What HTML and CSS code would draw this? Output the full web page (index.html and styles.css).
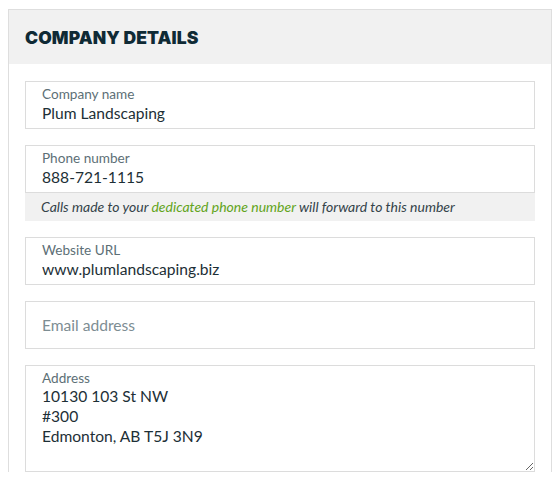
FILE: index.html
```html
<!DOCTYPE html>
<html lang="en">
<head>
    <meta charset="UTF-8">
    <meta name="viewport" content="width=device-width, initial-scale=1.0">
    <title>Company Details</title>
    <link rel="stylesheet" href="styles.css">
</head>
<body>
    <div class="panel">
        <div class="panel-header">
            <h2>Company Details</h2>
        </div>
        <form class="panel-body">
            <div class="field">
                <label class="field-label" for="companyName">Company name</label>
                <input class="field-input" type="text" id="companyName" value="Plum Landscaping">
            </div>
            <div class="field field-with-hint">
                <label class="field-label" for="phone">Phone number</label>
                <input class="field-input" type="text" id="phone" value="888-721-1115">
            </div>
            <p class="hint">Calls made to your <a href="#">dedicated phone number</a> will forward to this number</p>
            <div class="field">
                <label class="field-label" for="website">Website URL</label>
                <input class="field-input" type="text" id="website" value="www.plumlandscaping.biz">
            </div>
            <div class="field">
                <input class="field-input field-empty" type="email" id="email" placeholder="Email address">
            </div>
            <div class="field">
                <label class="field-label" for="address">Address</label>
                <textarea class="field-input field-area" id="address">10130 103 St NW
#300
Edmonton, AB T5J 3N9</textarea>
            </div>
        </form>
    </div>
</body>
</html>
```

FILE: styles.css
```css
body {
    font-family: Lato, "Source Sans Pro", sans-serif;
    margin: 9px 8px 0;
    background-color: #fff;
    color: #1d2f36;
}
.panel {
    border: 1px solid #dedede;
    border-bottom: none;
}
.panel-header {
    background-color: #f1f1f1;
    height: 54px;
    padding: 0 16px;
    display: flex;
    align-items: center;
}
.panel-header h2 {
    margin: 0;
    font-family: Inter, sans-serif;
    font-weight: 900;
    font-size: 17.5px;
    text-transform: uppercase;
    color: #0f2a35;
    letter-spacing: 0.1px;
}
.panel-body {
    padding: 17px 16px 0;
}
.field {
    position: relative;
    margin-bottom: 16px;
}
.field-with-hint {
    margin-bottom: 0;
}
.field-label {
    position: absolute;
    left: 17px;
    top: 5px;
    font-size: 13.6px;
    line-height: 16px;
    color: #5d6f76;
}
.field-input {
    display: block;
    width: 100%;
    box-sizing: border-box;
    border: 1px solid #dcdcdc;
    border-radius: 0;
    padding: 21px 16px 5px;
    font-family: inherit;
    font-size: 15.6px;
    line-height: 20px;
    color: #1d2f36;
    background: #fff;
    outline: none;
}
.field-empty {
    padding: 13px 16px;
}
.field-empty::placeholder {
    color: #7d8d93;
    opacity: 1;
}
.field-area {
    height: 107px;
    padding: 20px 16px 6px;
    resize: vertical;
}
.hint {
    margin: 0 0 16px;
    background-color: #f1f1f1;
    padding: 0 16px;
    height: 28px;
    line-height: 28px;
    font-size: 14px;
    font-style: italic;
    color: #34434a;
}
.hint a {
    color: #62a420;
    text-decoration: none;
}
```
